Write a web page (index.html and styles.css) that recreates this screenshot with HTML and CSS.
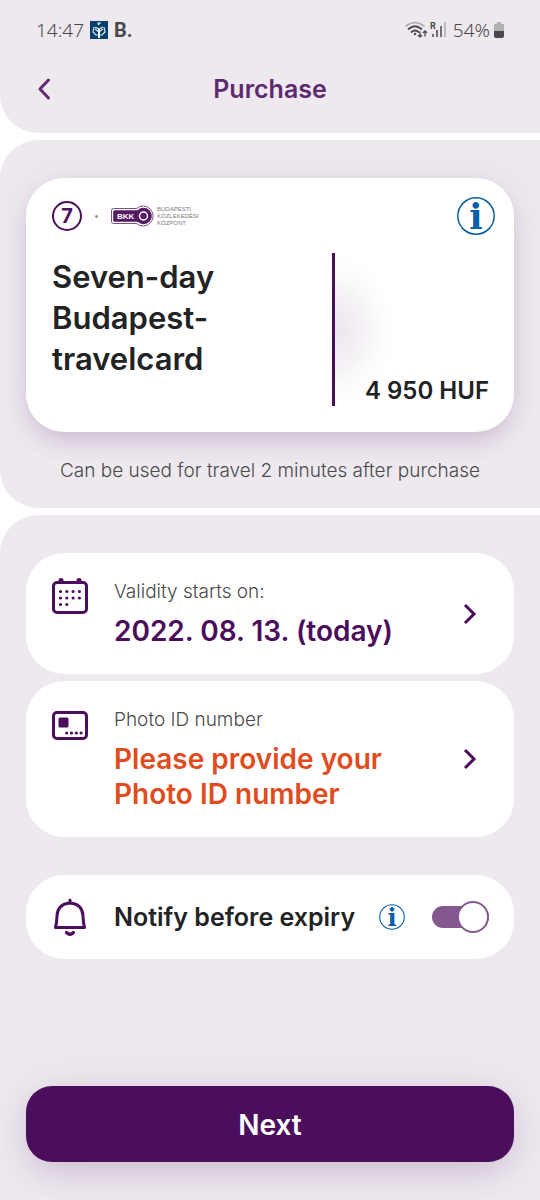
FILE: index.html
```
<!DOCTYPE html>
<html lang="en">
<head>
<meta charset="utf-8">
<meta name="viewport" content="width=device-width, initial-scale=1">
<title>Purchase</title>
<link rel="stylesheet" href="styles.css">
</head>
<body>
<div class="app">
  <header class="panel panel-top">
    <div class="status">
      <div class="status-group">
        <span>14:47</span>
        <svg class="app-badge" width="18" height="18" viewBox="0 0 18 18" aria-hidden="true">
          <rect width="18" height="18" fill="#04406b"/>
          <path d="M9 11L5 8M9 11L13 8M4 6L3 11L6 14L8 14M14 6L15 11L12 14L10 14M5 6L9 8L13 6M7 2H10L8 4" fill="none" stroke="#dde8ee" stroke-width="1.2"/>
          <path d="M9 8V17" stroke="#fff" stroke-width="2"/>
        </svg>
        <span class="status-brand">B.</span>
      </div>
      <div class="status-group status-right">
        <svg width="44" height="18" viewBox="0 0 44 18" aria-hidden="true">
          <g fill="none" stroke-linecap="round">
            <path d="M1 5Q10 -2 19 5" stroke="#aaa7ab" stroke-width="1.6"/>
            <path d="M3.500 8Q10 2.500 16.500 8M6.500 11Q10 8 13.500 11" stroke="#4a484b" stroke-width="1.7"/>
            <path d="M15 11V16M13.300 14.500L15 16L16.700 14.500M20 15V10M18.300 11.500L20 9.800L21.700 11.500" stroke="#4a484b" stroke-width="1.3"/>
          </g>
          <circle cx="10" cy="13" r="1.200" fill="#4a484b"/>
          <text class="roaming" x="25" y="8">R</text>
          <path d="M28 13V16M32 9V16M36 5V16" stroke="#4a484b" stroke-width="1.500"/>
          <path d="M40 1V16" stroke="#aaa7ab" stroke-width="1.500"/>
        </svg>
        <span>54%</span>
        <svg width="10" height="16" viewBox="0 0 10 16" aria-hidden="true">
          <path d="M3 0H7V2H9Q10 2 10 3V9H0V3Q0 2 1 2H3Z" fill="#b3b0b4"/>
          <path d="M0 9H10V14Q10 16 8 16H2Q0 16 0 14Z" fill="#4a484b"/>
        </svg>
      </div>
    </div>
    <div class="title-bar">
      <button class="back" type="button" aria-label="Back">
        <svg width="12" height="22" viewBox="0 0 12 22"><path d="M10.500 2L2 11L10.500 20" fill="none" stroke="#5f2970" stroke-width="3" stroke-linecap="round" stroke-linejoin="round"/></svg>
      </button>
      <h1>Purchase</h1>
    </div>
  </header>

  <section class="panel panel-ticket">
    <article class="ticket">
      <div class="ticket-head">
        <span class="days">7</span>
        <span class="dot"></span>
        <span class="operator">
          <svg width="44" height="22" viewBox="0 0 44 22" aria-hidden="true">
            <path d="M2.500 3.500H25.500A10 10 0 1 1 25.500 18.500H2.500Q.5 18.500 .5 16.500V5.500Q.5 3.500 2.500 3.500Z" fill="#fff" stroke="#7b5288" stroke-width="1"/>
            <rect x="2.200" y="5.200" width="28" height="11.600" rx="1.500" fill="#551a63"/>
            <circle cx="32.500" cy="11" r="8.300" fill="#551a63"/>
            <circle cx="32.500" cy="11" r="4" fill="none" stroke="#fff" stroke-width="1.500"/>
            <text class="bkk" x="6" y="14">BKK</text>
          </svg>
          <span class="operator-name">BUDAPESTI<br>KÖZLEKEDÉSI<br>KÖZPONT</span>
        </span>
        <button class="info" type="button" aria-label="Ticket information">
          <svg width="38" height="38" viewBox="0 0 38 38"><circle cx="19" cy="19" r="18.200" fill="none" stroke="#0860a8" stroke-width="1.500"/><text class="info-letter" x="19" y="32">i</text></svg>
        </button>
      </div>
      <div class="ticket-body">
        <h2>Seven-day Budapest-travelcard</h2>
        <div class="price">4 950 HUF</div>
      </div>
    </article>
    <p class="note">Can be used for travel 2 minutes after purchase</p>
  </section>

  <main class="panel panel-options">
    <button class="row" type="button">
      <svg class="row-icon" width="36" height="36" viewBox="0 0 36 36" aria-hidden="true">
        <rect x="1.500" y="4.500" width="33" height="30" rx="3.500" fill="none" stroke="#4b0e5d" stroke-width="3"/>
        <path d="M6.500 4V2Q6.500 0 9 0Q11.500 0 11.500 2V4ZM24.500 4V2Q24.500 0 27 0Q29.500 0 29.500 2V4Z" fill="#4b0e5d"/>
        <path d="M8.500 13.500H28M8.500 20H28M8.500 26.500H15.500" fill="none" stroke="#4b0e5d" stroke-width="3.200" stroke-linecap="round" stroke-dasharray="0 6.300"/>
      </svg>
      <span class="row-text"><span class="label">Validity starts on:</span><span class="value">2022. 08. 13. (today)</span></span>
      <svg class="chevron" width="14" height="22" viewBox="0 0 14 22" aria-hidden="true"><path d="M2 2L11 11L2 20" fill="none" stroke="#4b0e5d" stroke-width="3"/></svg>
    </button>
    <button class="row" type="button">
      <svg class="row-icon" width="36" height="36" viewBox="0 0 36 36" aria-hidden="true">
        <rect x="1.500" y="6.500" width="33" height="26" rx="3.500" fill="none" stroke="#4b0e5d" stroke-width="3"/>
        <rect x="6.500" y="11.500" width="10" height="10" rx="1.500" fill="#4b0e5d"/>
        <path d="M14.700 27H30" fill="none" stroke="#4b0e5d" stroke-width="3.200" stroke-linecap="round" stroke-dasharray="0 4.800"/>
      </svg>
      <span class="row-text"><span class="label">Photo ID number</span><span class="value value-missing">Please provide your<br>Photo ID number</span></span>
      <svg class="chevron" width="14" height="22" viewBox="0 0 14 22" aria-hidden="true"><path d="M2 2L11 11L2 20" fill="none" stroke="#4b0e5d" stroke-width="3"/></svg>
    </button>
    <div class="row row-notify">
      <svg class="row-icon" width="36" height="38" viewBox="0 0 36 38" aria-hidden="true">
        <path d="M18 2V5M18 5Q30.500 6 31 18Q31.200 25 32.500 29.500H3.500Q4.800 25 5 18Q5.500 6 18 5Z" fill="none" stroke="#4b0e5d" stroke-width="3" stroke-linecap="round" stroke-linejoin="round"/>
        <path d="M14.500 34.500Q18 38 21.500 34.500" fill="none" stroke="#4b0e5d" stroke-width="3.200" stroke-linecap="round"/>
      </svg>
      <label class="notify-label" for="notify">Notify before expiry</label>
      <button class="info" type="button" aria-label="About notifications">
        <svg width="26" height="26" viewBox="0 0 38 38"><circle cx="19" cy="19" r="18" fill="none" stroke="#0860a8" stroke-width="1.600"/><text class="info-letter" x="19" y="32">i</text></svg>
      </button>
      <input class="switch" id="notify" type="checkbox" role="switch" checked>
    </div>
    <button class="next" type="button">Next</button>
  </main>
</div>
</body>
</html>
```
FILE: styles.css
```
*,
*::before { box-sizing: border-box; }

body {
  margin: 0;
  background: #fff;
  color: #222324;
  font-family: Inter, "Liberation Sans", sans-serif;
}

button {
  font: inherit;
  color: inherit;
  border: 0;
  padding: 0;
  background: none;
  cursor: pointer;
}

svg { display: block; flex: none; overflow: visible; }

h1, h2, p { margin: 0; }

.app {
  min-height: 100vh;
  display: flex;
  flex-direction: column;
  gap: 7px;
}

.panel { background: #eee9ef; }

.panel-top {
  padding-bottom: 13px;
  border-bottom-left-radius: 38px;
}

.status {
  display: flex;
  justify-content: space-between;
  align-items: center;
  padding: 17px 36px 0;
  color: #4a484b;
  font: 300 19px/26px "Noto Sans", sans-serif;
}

.status-group {
  display: flex;
  align-items: center;
  gap: 6px;
}

.status-right { gap: 4px; }

.status-brand {
  font: 700 20px/26px Roboto, sans-serif;
}

.roaming {
  font: 700 9px Roboto, sans-serif;
  fill: #4a484b;
}

.title-bar {
  display: grid;
  grid-template-columns: 12px 1fr 12px;
  align-items: center;
  padding: 30px 38px 15px;
}

h1 {
  color: #5f2970;
  font-size: 25px;
  font-weight: 600;
  line-height: 32px;
  text-align: center;
}

.panel-ticket {
  padding: 38px 26px 24px;
  border-radius: 38px 0 0 38px;
}

.ticket {
  padding: 19px 19px 26px 26px;
  border-radius: 38px;
  background: #fff;
  box-shadow: 0 13px 26px -6px rgba(75, 14, 93, 0.18), 0 0 38px rgba(75, 14, 93, 0.07);
}

.ticket-head {
  display: flex;
  align-items: center;
  height: 38px;
}

.days {
  width: 30px;
  height: 30px;
  border: 2px solid #4b0e5d;
  border-radius: 50%;
  color: #4b0e5d;
  font-size: 20px;
  font-weight: 700;
  line-height: 26px;
  text-align: center;
}

.dot {
  width: 3px;
  height: 3px;
  margin: 0 13px;
  border-radius: 50%;
  background: #a587ae;
}

.operator {
  display: flex;
  align-items: center;
  gap: 2px;
}

.operator-name {
  color: #7c7c7c;
  font: 6px/7px "Liberation Sans", sans-serif;
}

.bkk {
  fill: #fff;
  font: 700 8px "Liberation Sans", sans-serif;
}

.ticket-head .info { margin-left: auto; }

.info-letter {
  fill: #0860a8;
  font: 700 35px "DejaVu Serif", serif;
  text-anchor: middle;
}

.ticket-body {
  display: grid;
  grid-template-columns: 280px 1fr;
  min-height: 153px;
  margin: 18px 6px 0 0;
}

h2 {
  max-width: 200px;
  padding-top: 3px;
  font-size: 31px;
  font-weight: 600;
  line-height: 41px;
}

.price {
  display: flex;
  justify-content: flex-end;
  align-items: flex-end;
  border-left: 3px solid #4b0e5d;
  background: radial-gradient(60px 76px at 0 50%, rgba(75, 14, 93, 0.1), rgba(75, 14, 93, 0.07) 35%, rgba(75, 14, 93, 0.01) 80%, transparent);
  font-size: 24px;
  font-weight: 600;
  line-height: 30px;
  white-space: nowrap;
}

.note {
  margin-top: 25px;
  color: #4a4a4b;
  font-size: 19px;
  font-weight: 300;
  line-height: 27px;
  text-align: center;
}

.panel-options {
  flex: 1;
  display: flex;
  flex-direction: column;
  gap: 7px;
  padding: 38px 26px;
  border-top-left-radius: 38px;
}

.row {
  display: flex;
  align-items: center;
  padding: 25px 37px 25px 26px;
  border-radius: 38px;
  background: #fff;
  text-align: left;
}

.row-icon {
  align-self: flex-start;
  margin-right: 26px;
}

.row-text {
  flex: 1;
  display: flex;
  flex-direction: column;
  gap: 8px;
}

.label {
  color: #4a4a4b;
  font-size: 19px;
  font-weight: 300;
  line-height: 28px;
}

.value {
  color: #4b0e5d;
  font-size: 28px;
  font-weight: 600;
  line-height: 35px;
}

.value-missing { color: #e04c20; }

.row-notify {
  margin-top: 31px;
  padding: 23px 25px 23px 26px;
}

.notify-label {
  flex: 1;
  font-size: 25px;
  font-weight: 600;
  line-height: 38px;
  white-space: nowrap;
}

.switch {
  appearance: none;
  display: flex;
  align-items: center;
  width: 57px;
  height: 22px;
  margin: 0 0 0 27px;
  border-radius: 11px;
  background: #b9b3bb;
  cursor: pointer;
}

.switch::before {
  content: "";
  width: 32px;
  height: 32px;
  flex: none;
  border: 2px solid #85578f;
  border-radius: 50%;
  background: #fff;
}

.switch:checked {
  justify-content: flex-end;
  background: #85578f;
}

.next {
  padding: 21px 26px 19px;
  margin-top: auto;
  border-radius: 26px;
  background: #4b0e5d;
  box-shadow: 0 13px 38px -8px rgba(75, 14, 93, 0.2), 0 0 50px rgba(75, 14, 93, 0.07);
  color: #fff;
  font-size: 28px;
  font-weight: 600;
  line-height: 36px;
}
```
